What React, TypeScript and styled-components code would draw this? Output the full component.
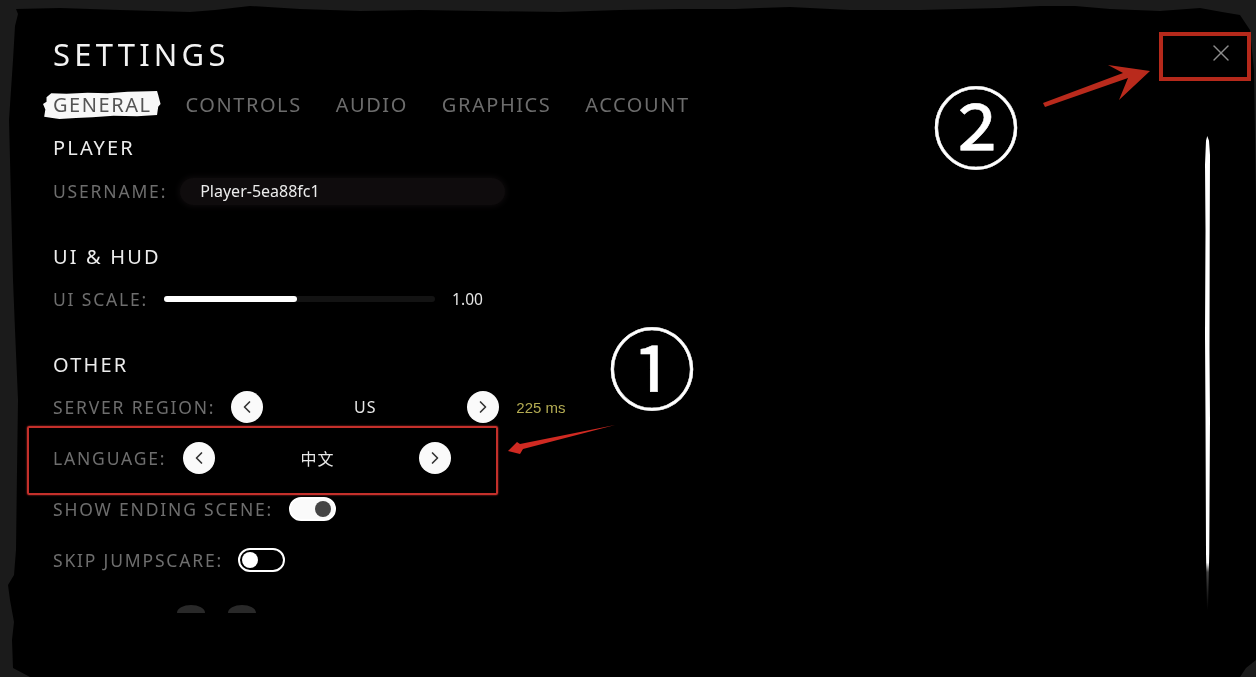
import React from "react";
import styled, { createGlobalStyle } from "styled-components";
import { ChevronLeft, ChevronRight, X } from "lucide-react";

const GlobalStyle = createGlobalStyle`
  html, body {
    margin: 0;
    padding: 0;
    background: #1a1a1a;
  }
  * {
    box-sizing: border-box;
  }
`;

const Stage = styled.div`
  position: relative;
  width: 1256px;
  height: 677px;
  overflow: hidden;
  background: #1b1b1b;
  font-family: "Noto Sans", "Noto Sans CJK SC", sans-serif;
  filter: blur(0.35px);
`;

// torn paper edge of the dialog
const Panel = styled.main`
  width: 100%;
  height: 100%;
  padding: 32px 46px 0 53px;
  background: #000;
  clip-path: polygon(
    15px 26px, 18px 14px, 16px 9px, 60px 8px, 120px 10px, 190px 12px, 215px 10px, 250px 6px, 300px 9px, 360px 11px,
    420px 10px, 480px 11px, 560px 12px, 620px 10px, 680px 9px, 735px 9px, 790px 7px, 850px 10px, 920px 10px, 1000px 8px,
    1040px 6px, 1075px 6px, 1110px 9px, 1160px 11px, 1200px 8px, 1222px 12px, 1240px 15px, 1250px 30px, 1254px 70px,
    1256px 200px, 1256px 660px, 1246px 668px, 1240px 677px, 30px 677px, 13px 668px, 12px 640px, 14px 622px, 10px 600px,
    8px 585px, 14px 575px, 16px 550px, 17px 470px, 18px 400px, 15px 330px, 13px 280px, 11px 200px, 9px 120px, 13px 60px
  );
`;

const Title = styled.h1`
  margin: 0;
  height: 44px;
  font-size: 31px;
  line-height: 44px;
  font-weight: 400;
  letter-spacing: 4.2px;
  color: #f2f2f2;
`;

const Tabs = styled.nav`
  display: flex;
  gap: 34px;
  height: 32px;
  margin-top: 13px;
`;

const Tab = styled.span<{ $active?: boolean }>`
  position: relative;
  z-index: 0;
  font-size: 20px;
  line-height: 32px;
  letter-spacing: 1.55px;
  color: ${(p) => (p.$active ? "#555" : "#6c6c6c")};

  ${(p) =>
    p.$active &&
    `&::before {
      content: "";
      position: absolute;
      z-index: -1;
      left: -10px;
      right: -9px;
      top: 2px;
      bottom: 2px;
      background: #f8f8f8;
      clip-path: polygon(
        3% 22%, 7% 8%, 20% 10%, 38% 6%, 55% 8%, 72% 3%, 90% 1%, 97% 0, 98% 14%, 100% 46%, 98% 56%, 97% 86%,
        80% 90%, 60% 88%, 42% 94%, 28% 96%, 14% 100%, 8% 96%, 1% 92%, 2% 66%, 0 46%, 3% 38%
      );
    }`}
`;

const Body = styled.div`
  display: flex;
  justify-content: space-between;
  height: 500px;
  margin-top: 15px;
`;

const Content = styled.div`
  display: flex;
  flex-direction: column;
`;

const Section = styled.section<{ $gap?: number }>`
  display: flex;
  flex-direction: column;
  gap: ${(p) => p.$gap ?? 14}px;
  margin-bottom: 38px;
`;

const SectionTitle = styled.h2`
  margin: 0;
  height: 24px;
  font-size: 20px;
  line-height: 24px;
  font-weight: 400;
  letter-spacing: 2.15px;
  color: #ececec;
`;

const RowList = styled.div`
  display: flex;
  flex-direction: column;
  gap: 19px;
`;

const Row = styled.div`
  display: flex;
  align-items: center;
  height: 32px;
`;

const Label = styled.span<{ $gap?: number }>`
  margin-right: ${(p) => p.$gap ?? 16}px;
  font-size: 17.5px;
  letter-spacing: 1.82px;
  color: #6e6e6e;
  white-space: nowrap;
`;

const UsernameField = styled.div`
  width: 325px;
  height: 27px;
  margin-left: -3px;
  padding-left: 20px;
  border-radius: 14px;
  background: #0f0c0d;
  box-shadow: 0 0 6px 1px #0f0c0d;
  font-size: 16px;
  line-height: 27px;
  color: #ececec;
`;

const SliderTrack = styled.div`
  width: 271px;
  height: 6px;
  border-radius: 3px;
  background: #131313;
`;

const SliderFill = styled.div`
  height: 100%;
  border-radius: 3px;
  background: #fff;
`;

const SliderValue = styled.span`
  margin-left: 17px;
  font-size: 15.5px;
  color: #e6e6e6;
`;

const RoundButton = styled.button`
  display: flex;
  align-items: center;
  justify-content: center;
  flex: none;
  width: 32px;
  height: 32px;
  padding: 0;
  border: 0;
  border-radius: 50%;
  background: #fafafa;
  color: #333;
`;

const SelectValue = styled.span<{ $width: number }>`
  width: ${(p) => p.$width}px;
  text-align: center;
  font-size: 16px;
  letter-spacing: 1px;
  color: #e8e8e8;
`;

const Ping = styled.span`
  margin-left: 17px;
  font-family: "Liberation Sans", sans-serif;
  font-size: 15px;
  color: #b3ab52;
`;

const Toggle = styled.span<{ $on?: boolean }>`
  display: flex;
  align-items: center;
  justify-content: ${(p) => (p.$on ? "flex-end" : "flex-start")};
  width: 47px;
  height: 24px;
  padding: 0 ${(p) => (p.$on ? "3px" : "2px")};
  border: 2px solid #fff;
  border-radius: 12px;
  background: ${(p) => (p.$on ? "#fafafa" : "#000")};
`;

const Knob = styled.span<{ $on?: boolean }>`
  width: 16px;
  height: 16px;
  border-radius: 50%;
  background: ${(p) => (p.$on ? "#444" : "#fff")};
`;

// next row of the list, cut off by the fade at the bottom
const FadedRow = styled.div`
  display: flex;
  gap: 23px;
  margin-top: 15px;
  padding-left: 124px;
`;

const FadedBump = styled.span`
  width: 28px;
  height: 8px;
  border-radius: 50% 50% 0 0 / 100% 100% 0 0;
  background: #292929;
`;

const Scrollbar = styled.div`
  flex: none;
  width: 5px;
  height: 474px;
  background: linear-gradient(#fff 0, #fff 90%, #444 92%, #000 100%);
  clip-path: polygon(45% 0, 80% 1%, 100% 4%, 95% 20%, 90% 45%, 100% 60%, 85% 88%, 60% 100%, 40% 100%, 20% 88%, 10% 60%, 0 42%, 10% 20%, 0 6%, 20% 1%);
`;

const CloseButton = styled.span`
  position: absolute;
  top: 39px;
  left: 1207px;
  display: flex;
  color: #8c8c8c;
`;

const RedBox = styled.div<{ $heavy?: boolean }>`
  position: absolute;
  border: ${(p) => (p.$heavy ? "4px solid #b5291b" : "2px solid #c4302b")};
  ${(p) => !p.$heavy && "border-radius: 2px; box-shadow: 0 0 2px #c4302b;"}
`;

const LanguageBox = styled(RedBox)`
  left: 27px;
  top: 426px;
  width: 471px;
  height: 69px;
`;

const CloseBox = styled(RedBox)`
  left: 1159px;
  top: 32px;
  width: 92px;
  height: 49px;
`;

const Callout = styled.span<{ $left: number; $top: number }>`
  position: absolute;
  left: ${(p) => p.$left}px;
  top: ${(p) => p.$top}px;
  font-family: "Noto Sans CJK SC", sans-serif;
  font-size: 88px;
  line-height: 88px;
  color: #fff;
  -webkit-text-stroke: 0.5px #fff;
`;

const ArrowLayer = styled.svg`
  position: absolute;
  inset: 0;
  pointer-events: none;
`;

const Arrows = () => (
  <ArrowLayer width="1256" height="677" viewBox="0 0 1256 677">
    <path d="M615 425 L520 444 L517 442 L508 451 L520 454 L523 449 Z" fill="#d02a22" />
    <path d="M1043 103 L1045 107 L1128 78 L1119 100 L1150 71 L1108 65 L1123 73 Z" fill="#b92a1c" />
  </ArrowLayer>
);

const Selector = ({ value, width }: { value: string; width: number }) => (
  <>
    <RoundButton>
      <ChevronLeft size={20} />
    </RoundButton>
    <SelectValue $width={width}>{value}</SelectValue>
    <RoundButton>
      <ChevronRight size={20} />
    </RoundButton>
  </>
);

export default function App() {
  return (
    <Stage>
      <GlobalStyle />
      <Panel>
        <Title>SETTINGS</Title>
        <Tabs>
          <Tab $active>GENERAL</Tab>
          <Tab>CONTROLS</Tab>
          <Tab>AUDIO</Tab>
          <Tab>GRAPHICS</Tab>
          <Tab>ACCOUNT</Tab>
        </Tabs>
        <Body>
          <Content>
            <Section $gap={15}>
              <SectionTitle>PLAYER</SectionTitle>
              <Row>
                <Label>USERNAME:</Label>
                <UsernameField>Player-5ea88fc1</UsernameField>
              </Row>
            </Section>
            <Section>
              <SectionTitle>UI &amp; HUD</SectionTitle>
              <Row>
                <Label>UI SCALE:</Label>
                <SliderTrack>
                  <SliderFill style={{ width: `${(133 / 271) * 100}%` }} />
                </SliderTrack>
                <SliderValue>1.00</SliderValue>
              </Row>
            </Section>
            <Section>
              <SectionTitle>OTHER</SectionTitle>
              <RowList>
                <Row>
                  <Label>SERVER REGION:</Label>
                  <Selector value="US" width={204} />
                  <Ping>225 ms</Ping>
                </Row>
                <Row>
                  <Label $gap={17}>LANGUAGE:</Label>
                  <Selector value="中文" width={204} />
                </Row>
                <Row>
                  <Label>SHOW ENDING SCENE:</Label>
                  <Toggle $on>
                    <Knob $on />
                  </Toggle>
                </Row>
                <Row>
                  <Label $gap={15}>SKIP JUMPSCARE:</Label>
                  <Toggle>
                    <Knob />
                  </Toggle>
                </Row>
              </RowList>
              <FadedRow>
                <FadedBump />
                <FadedBump />
              </FadedRow>
            </Section>
          </Content>
          <Scrollbar />
        </Body>
      </Panel>
      <CloseButton>
        <X size={28} strokeWidth={1.2} />
      </CloseButton>
      <LanguageBox />
      <CloseBox $heavy />
      <Arrows />
      <Callout $left={608} $top={320}>①</Callout>
      <Callout $left={932} $top={79}>②</Callout>
    </Stage>
  );
}
